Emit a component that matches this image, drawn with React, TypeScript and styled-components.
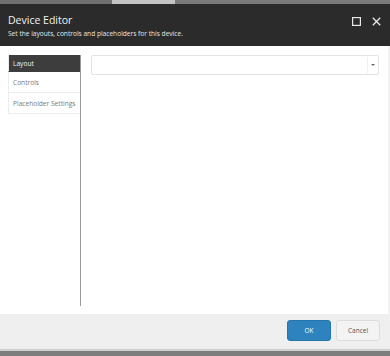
import React from "react";
import styled, { createGlobalStyle } from "styled-components";

const Global = createGlobalStyle`
  html, body { margin: 0; padding: 0; background: #ffffff; }
  body { font-family: "Open Sans", "Liberation Sans", sans-serif; }
  * { box-sizing: border-box; }
`;

const Page = styled.div`
  width: 390px;
  height: 356px;
  display: flex;
  flex-direction: column;
  overflow: hidden;
`;

const TopStrip = styled.div`
  height: 4px;
  display: flex;
  background: #6f6f6f;
`;

const StripTab = styled.div<{ $w: number; $c: string }>`
  width: ${(p) => p.$w}px;
  background: ${(p) => p.$c};
`;

const Header = styled.div`
  height: 42px;
  background: #2b2b2b;
  display: flex;
  align-items: flex-start;
  justify-content: space-between;
  padding: 9px 9px 0 8px;
`;

const Titles = styled.div`
  display: flex;
  flex-direction: column;
`;

const Title = styled.div`
  color: #f2f2f2;
  font-size: 10.5px;
  line-height: 14px;
`;

const Subtitle = styled.div`
  color: #e6e6e6;
  font-size: 6.6px;
  line-height: 12px;
  margin-top: 1px;
`;

const Controls = styled.div`
  display: flex;
  align-items: center;
  gap: 11px;
  margin-top: 4px;
`;

const Body = styled.div`
  flex: 1;
  display: flex;
  padding: 9px 9px 8px 8px;
  gap: 10px;
  border-right: 2px solid #f3f3f3;
`;

const Nav = styled.div`
  width: 73px;
  display: flex;
  flex-direction: column;
  border-right: 1.5px solid #9a9a9a;
`;

const NavItem = styled.div<{ $active?: boolean }>`
  height: ${(p) => (p.$active ? 17 : 21)}px;
  padding-left: 4px;
  display: flex;
  align-items: center;
  font-size: 6.6px;
  white-space: nowrap;
  color: ${(p) => (p.$active ? "#f4f4f4" : "#7a7a7a")};
  background: ${(p) => (p.$active ? "#3d3d3d" : "#ffffff")};
  border-bottom: 1px solid ${(p) => (p.$active ? "#3d3d3d" : "#ececec")};
  border-left: 1px solid #ececec;
`;

const Main = styled.div`
  flex: 1;
`;

const Select = styled.div`
  height: 20px;
  border: 1px solid #e3e3e3;
  border-radius: 2px;
  display: flex;
  justify-content: flex-end;
  align-items: stretch;
  padding: 1px;
`;

const Caret = styled.div`
  width: 10px;
  border-left: 1px solid #efefef;
  display: flex;
  align-items: center;
  justify-content: center;
  &::after {
    content: "";
    border-left: 2px solid transparent;
    border-right: 2px solid transparent;
    border-top: 2.5px solid #666;
  }
`;

const Footer = styled.div`
  height: 35px;
  background: #efefef;
  display: flex;
  align-items: center;
  justify-content: flex-end;
  gap: 5px;
  padding: 0 10px 2px 0;
`;

const Button = styled.button<{ $primary?: boolean }>`
  width: 44px;
  height: 21px;
  border-radius: 3px;
  font-family: "Open Sans", "Liberation Sans", sans-serif;
  font-size: 6.5px;
  padding: 0;
  cursor: pointer;
  color: ${(p) => (p.$primary ? "#ffffff" : "#555555")};
  background: ${(p) => (p.$primary ? "#2e82bd" : "#f3f3f3")};
  border: 1px solid ${(p) => (p.$primary ? "#2676ae" : "#dcdcdc")};
`;

const BottomStrip = styled.div`
  height: 7px;
  background: #7d7d7d;
  border-top: 2px solid #cfcfcf;
`;

export default function App() {
  return (
    <Page>
      <Global />
      <TopStrip>
        <StripTab $w={112} $c="#707070" />
        <StripTab $w={63} $c="#c4c4c4" />
        <StripTab $w={215} $c="#7a7a7a" />
      </TopStrip>
      <Header>
        <Titles>
          <Title>Device Editor</Title>
          <Subtitle>Set the layouts, controls and placeholders for this device.</Subtitle>
        </Titles>
        <Controls>
          <svg width="9" height="9" viewBox="0 0 9 9">
            <rect x="0.6" y="0.6" width="7.8" height="7.8" fill="none" stroke="#e8e8e8" strokeWidth="1.2" />
          </svg>
          <svg width="9" height="9" viewBox="0 0 9 9">
            <path d="M0.8 0.8 L8.2 8.2 M8.2 0.8 L0.8 8.2" stroke="#e8e8e8" strokeWidth="1.3" />
          </svg>
        </Controls>
      </Header>
      <Body>
        <Nav>
          <NavItem $active>Layout</NavItem>
          <NavItem>Controls</NavItem>
          <NavItem>Placeholder Settings</NavItem>
        </Nav>
        <Main>
          <Select>
            <Caret />
          </Select>
        </Main>
      </Body>
      <Footer>
        <Button $primary>OK</Button>
        <Button>Cancel</Button>
      </Footer>
      <BottomStrip />
    </Page>
  );
}
